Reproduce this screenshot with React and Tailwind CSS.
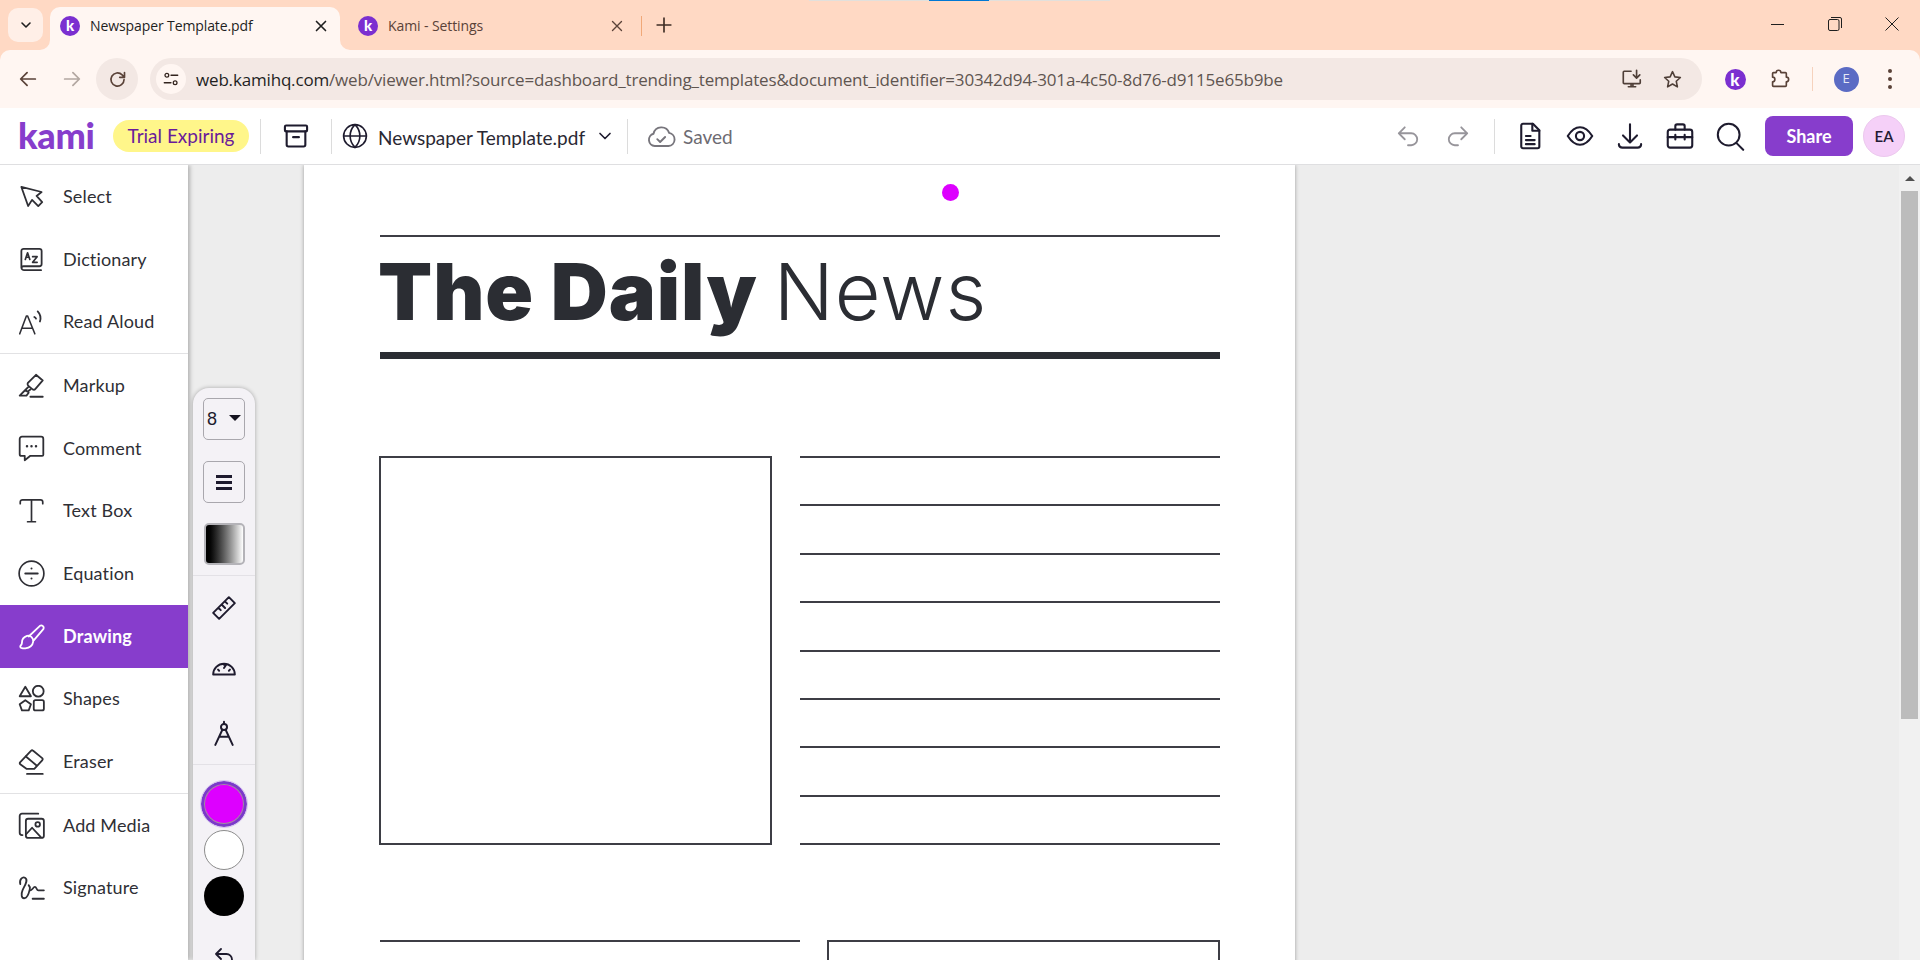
import React from 'react';

const S = ({ size = 24, w = 2, color = 'currentColor', children, className = '' }) => (
  <svg width={size} height={size} viewBox="0 0 24 24" fill="none" stroke={color} strokeWidth={w} strokeLinecap="round" strokeLinejoin="round" className={className}>
    {children}
  </svg>
);

const KBadge = ({ size = 'w-5 h-5 text-[15px]' }) => (
  <span className={`${size} rounded-full bg-[#7b2fd0] text-white font-['Lato'] font-black flex items-center justify-center leading-none shrink-0`}>k</span>
);

const sidebarIcons = {
  select: <path d="M3 3.500 21 8l-4.500 3.500 5 5.500-3.500 3.500-5.500-5.500L9 20.500z" />,
  dictionary: (
    <>
      <path d="M5 21.500h15.500M5.500 21.500A2.500 2.500 0 0 1 3 19V4.500A2 2 0 0 1 5 2.500h14a2 2 0 0 1 2 2V16a2 2 0 0 1-2 2H5a2 2 0 0 0-2 1.500" />
      <path d="m6.500 12 2-6 2 6M7.300 10h2.500M13 9.500h4l-4 5h4" strokeWidth="1.500" />
    </>
  ),
  read: (
    <>
      <path d="m1.500 23 6-16h1L15 23M4 18h8.500" strokeWidth="1.300" />
      <path d="M14.500 8a3 3 0 0 1 1.500 1.500M17.500 3a9 9 0 0 1 2 9" />
    </>
  ),
  markup: (
    <>
      <path d="M9.500 9 16 2.500l6 5-6.500 7.500a2 2 0 0 1-2.500.500l-3.500-3a2 2 0 0 1 0-3.500zM9 13.500 6.500 16l2 1.500L11 15.500M6.500 16 1.500 21h6l2-2.500" />
      <path d="M11 22h11" />
    </>
  ),
  comment: (
    <>
      <path d="M3.500 1.500h17a2 2 0 0 1 2 2v14a1 1 0 0 1-1 1H11l-5 4v-4H3a1.500 1.500 0 0 1-1.500-1.500v-13.500a2 2 0 0 1 2-2z" />
      <path d="M8 10h.01M12 10h.01M16 10h.01" strokeWidth="2.200" />
    </>
  ),
  text: <path d="M2 6V4.500A2 2 0 0 1 4 2.500h16a2 2 0 0 1 2 2V6M12 2.500v19M8.500 22h7" strokeWidth="1.500" />,
  equation: (
    <>
      <circle cx="12" cy="12" r="11" strokeWidth="1.500" />
      <path d="M6.500 12h11M12 7.500h.01M12 16.500h.01" strokeWidth="1.800" />
    </>
  ),
  drawing: (
    <>
      <path d="m9.500 12 10-9.500a2.200 2.200 0 0 1 3 3L14 15.500" />
      <path d="M8 11.500c3-1 6 2 5.500 5-.500 3.500-3 5.500-7 6-2 .200-4.500 0-4.500-1.500 0-1.500 1.500-1 1.500-3.500 0-3 1.500-5 4.500-6z" />
    </>
  ),
  shapes: (
    <>
      <path d="M6.500 1.500 11.500 10h-10z" />
      <circle cx="18" cy="5.500" r="4.800" />
      <path d="m6.500 13.500 5 3.600-2 5.400h-6l-2-5.400z" />
      <rect x="14" y="13.500" width="9" height="9" rx="1.500" />
    </>
  ),
  eraser: (
    <>
      <path d="m2 12.500 9.500-10a1.500 1.500 0 0 1 2 0l8 6.500a1.500 1.500 0 0 1 0 2l-7 7.500h-7L2 14.500a1.500 1.500 0 0 1 0-2z" />
      <path d="m7 7.500 9.500 8M8 23h14" />
    </>
  ),
  media: (
    <>
      <path d="M4 20.500H3.500A2 2 0 0 1 1.500 18.500V3.500a2 2 0 0 1 2-2H18" />
      <rect x="7" y="6" width="16" height="17" rx="2" />
      <circle cx="17.500" cy="11" r="2" />
      <path d="m7 20 5.500-6 8 8.500" />
    </>
  ),
  signature: (
    <>
      <path d="M2 9c-1-4 2-7 4.500-5.500 3 2-1 7.500-2.500 11-1.500 3.500-1 7.500 2 7 3-.500 4-6 4.500-8 .500-2-1-3.500-1-3.500" />
      <path d="M10.500 14.500c1.500 1 3-3 4.500-3s1.500 3 3 3h5M13 22h10" />
    </>
  ),
};

const items = [
  [['Select', 'select'], ['Dictionary', 'dictionary'], ['Read Aloud', 'read']],
  [['Markup', 'markup'], ['Comment', 'comment'], ['Text Box', 'text'], ['Equation', 'equation'], ['Drawing', 'drawing'], ['Shapes', 'shapes'], ['Eraser', 'eraser']],
  [['Add Media', 'media'], ['Signature', 'signature']],
];

const Sidebar = () => (
  <aside className="w-[188px] shrink-0 bg-white shadow-[2px_0_4px_rgba(0,0,0,0.25)] z-10 font-['Lato'] text-[18px] tracking-[0.150px] text-[#2f2f35]">
    {items.map((group, i) => (
      <div key={i} className={i < 2 ? 'border-b border-[#e2e2e4]' : ''}>
        {group.map(([label, icon]) => (
          <div
            key={label}
            className={`h-[62.700px] flex items-center pl-[18px] gap-[18px] ${label === 'Drawing' ? 'bg-[#873dcc] text-white font-bold' : ''}`}
          >
            <S size={27} w={1.600}>{sidebarIcons[icon]}</S>
            <span>{label}</span>
          </div>
        ))}
      </div>
    ))}
  </aside>
);

const DrawPanel = () => (
  <div className="absolute left-[193px] top-[388px] w-[62px] h-[572px] bg-[#f4f2f6] rounded-t-[16px] shadow-[0_0_4px_rgba(0,0,0,0.3)] z-20 flex flex-col items-center text-[#1e1b2e] [&>*]:shrink-0">
    <div className="mt-[10px] w-[42px] h-[42px] border border-[#a9a7ad] rounded-[5px] flex items-center justify-between pl-[3px] pr-[3px] font-['Liberation_Sans'] text-[18px]">
      <span>8</span>
      <span className="w-0 h-0 border-x-[6px] border-x-transparent border-t-[6px] border-t-[#15131f] mb-[3px]" />
    </div>
    <div className="mt-[21px] w-[42px] h-[42px] border border-[#a9a7ad] rounded-[5px] flex flex-col items-center justify-center gap-[3px]">
      <span className="w-[16px] h-[3px] bg-[#1e1b2e]" />
      <span className="w-[16px] h-[3px] bg-[#1e1b2e]" />
      <span className="w-[16px] h-[3px] bg-[#1e1b2e]" />
    </div>
    <div className="mt-[20px] w-[41px] h-[42px] rounded-[5px] border-2 border-[#b4b3b8] bg-gradient-to-r from-black to-white" />
    <div className="mt-[10px] w-full border-t border-[#e3e1e6]" />
    <div className="h-[62px] flex items-center pt-[2px]">
      <S size={26} w={1.800}>
        <path d="m2 16.500 14.500-14.500 5.500 5.500L7.500 22zM7 12l2 2M10 9l3 3M13 6l2 2" />
      </S>
    </div>
    <div className="h-[60px] flex items-center">
      <S size={26} w={1.800}>
        <path d="M2 18a10 10 0 0 1 20 0zM12 12l2-3M6.500 13.500l1 1M17.500 13.500l-1 1M12 8v1" />
      </S>
    </div>
    <div className="h-[66px] flex items-center pt-[3px]">
      <S size={26} w={1.800}>
        <circle cx="12" cy="6.500" r="2.800" />
        <path d="M12 1.500v2M10.500 9 4 23M13.500 9 20 23M7.500 15.500h9" />
      </S>
    </div>
    <div className="w-full border-t border-[#e3e1e6]" />
    <div className="mt-[16px] w-[46px] h-[46px] rounded-full bg-[#dd00ff] border-[3px] border-[#7a3bc9] outline-1 outline-[#d8c7f0] shadow-[inset_0_0_0_1px_#999]" />
    <div className="mt-[3px] w-[40px] h-[40px] rounded-full bg-white border border-[#8c8c8c]" />
    <div className="mt-[6px] w-[40px] h-[40px] rounded-full bg-black" />
    <div className="mt-[29px]">
      <S size={24} w={1.800}><path d="M9 14 4 9l5-5M4 9h10.500a5.500 5.500 0 0 1 0 11H11" /></S>
    </div>
  </div>
);

const Tab = ({ title, active, close }) => (
  <div className={`relative h-[43px] w-[290px] flex items-center pb-[6px] pl-[10px] rounded-t-[10px] ${active ? 'bg-[#fff6f2] text-[#1f1f1f] pr-[11px]' : 'text-[#5a4238] pr-[13px]'}`}>
    {active && (
      <>
        <svg className="absolute left-[-10px] bottom-0" width="10" height="10" viewBox="0 0 10 10"><path d="M10 0v10H0a10 10 0 0 0 10-10z" fill="#fff6f2" /></svg>
        <svg className="absolute right-[-10px] bottom-0" width="10" height="10" viewBox="0 0 10 10"><path d="M0 0v10h10A10 10 0 0 1 0 0z" fill="#fff6f2" /></svg>
      </>
    )}
    <KBadge />
    <span className="ml-[10px] flex-1 text-[14px] font-['Open_Sans'] tracking-[-0.100px]">{title}</span>
    <S size={18} w={close} className="mr-[-1px]"><path d="m6 6 12 12M18 6 6 18" /></S>
  </div>
);

const TabStrip = () => (
  <div className="relative h-[50px] shrink-0 bg-[#ffd9c4] flex items-end">
    <div className="absolute left-[809px] top-0 w-[301px] h-[1px] bg-[#e2e0dc]" />
    <div className="absolute left-[929px] top-0 w-[60px] h-[1px] bg-[#0078d4]" />
    <div className="self-start mt-[8px] ml-[8px] w-[35px] h-[34px] rounded-[10px] bg-[#ffefe7] flex items-center justify-center text-[#1f1f1f]">
      <S size={16} w={2.400}><path d="m6 9 6 6 6-6" /></S>
    </div>
    <div className="ml-[7px]"><Tab title="Newspaper Template.pdf" active close={2.200} /></div>
    <div className="ml-[8px]"><Tab title="Kami - Settings" close={1.800} /></div>
    <div className="self-start mt-[16px] ml-[3px] w-[1px] h-[20px] bg-[#f0a878]" />
    <div className="self-start mt-[14px] ml-[11px] text-[#3f2d25]">
      <S size={22} w={1.800}><path d="M12 4.500v15M4.500 12h15" /></S>
    </div>
    <div className="ml-auto self-start flex h-[48px] text-[#1f1f1f]">
      <div className="w-[57px] flex items-center justify-center">
        <div className="w-[13px] border-t border-[#1f1f1f]" />
      </div>
      <div className="w-[57px] flex items-center justify-center">
        <svg width="14" height="14" viewBox="0 0 14 14" fill="none" stroke="#1f1f1f"><rect x="0.500" y="2.500" width="10.500" height="11" rx="1.500" /><path d="M3 .500h9a1.500 1.500 0 0 1 1.500 1.500v9" /></svg>
      </div>
      <div className="w-[57px] flex items-center justify-center">
        <svg width="14" height="14" viewBox="0 0 14 14" fill="none" stroke="#1f1f1f"><path d="m.500.500 13 13M13.500.500l-13 13" /></svg>
      </div>
    </div>
  </div>
);

const BrowserBar = () => (
  <div className="h-[58px] shrink-0 bg-[#ffd9c4]">
    <div className="h-[59px] bg-[#fff6f2] rounded-t-[10px] border-b border-[#f7dccd] flex items-center pl-[7px] text-[#5a4238]">
      <div className="w-[42px] flex justify-center">
        <S size={22} w={1.900}><path d="M20 12H4.500M11 5l-7 7 7 7" /></S>
      </div>
      <div className="ml-[2px] w-[42px] flex justify-center text-[#b3a7a1]">
        <S size={22} w={1.900}><path d="M4 12h15.500M13 5l7 7-7 7" /></S>
      </div>
      <div className="ml-[3px] w-[42px] h-[42px] rounded-full bg-[#f3e8e4] flex items-center justify-center">
        <S size={21} w={1.900}><path d="M19.500 12a7.500 7.500 0 1 1-2.200-5.300L20 9.500M20 4v5.500h-5.500" /></S>
      </div>
      <div className="ml-[12px] w-[1552px] h-[42px] rounded-full bg-[#f3e8e4] flex items-center pl-[6px]">
        <div className="w-[30px] h-[30px] rounded-full bg-[#fff6f2] flex items-center justify-center text-[#33241e]">
          <S size={18} w={1.700}>
            <circle cx="6.500" cy="7" r="2.500" />
            <path d="M12 7h9M3 17h9" />
            <circle cx="17.500" cy="17" r="2.500" />
          </S>
        </div>
        <span className="ml-[10px] mt-[1px] text-[17px] font-['Open_Sans'] tracking-[-0.170px] text-[#1f1f1f] whitespace-nowrap">
          web.kamihq.com<span className="text-[#5f5550]">/web/viewer.html?source=dashboard_trending_templates&amp;document_identifier=30342d94-301a-4c50-8d76-d9115e65b9be</span>
        </span>
        <div className="ml-auto flex items-center pr-[10px] text-[#4f3f38]">
          <div className="w-[40px] flex justify-center">
            <S size={22} w={1.800}>
              <path d="M11 3.500H3.500a1 1 0 0 0-1 1V16a1 1 0 0 0 1 1H20a1 1 0 0 0 1-1v-3M8 20.500h8M11 17v3.500M13 17v3.500" />
              <path d="M17 2.500v8M13.500 7.500l3.500 3.500 3.500-3.500" />
            </S>
          </div>
          <div className="w-[40px] flex justify-center">
            <S size={21} w={1.800}><path d="m12 3 2.700 6 6.300.700-4.700 4.300 1.300 6.500L12 17.200 6.400 20.500l1.300-6.500L3 9.700 9.300 9z" /></S>
          </div>
        </div>
      </div>
      <div className="ml-[11px] w-[44px] flex justify-center"><KBadge size="w-[21px] h-[21px] text-[17px]" /></div>
      <div className="w-[44px] flex justify-center">
        <S size={22} w={1.800}>
          <path d="M9 5a2.500 2.500 0 0 1 5 0h5a1 1 0 0 1 1 1v4a2.500 2.500 0 0 1 0 5v4a1 1 0 0 1-1 1H6a1 1 0 0 1-1-1v-4a2.500 2.500 0 0 0 0-5V6a1 1 0 0 1 1-1z" />
        </S>
      </div>
      <div className="ml-[11px] w-[1px] h-[24px] bg-[#f6d2bd]" />
      <div className="ml-[11px] w-[44px] flex justify-center">
        <span className="w-[25px] h-[25px] rounded-full bg-[#5b6bc4] text-[#e6e8f7] text-[13px] font-['Open_Sans'] flex items-center justify-center">E</span>
      </div>
      <div className="w-[44px] flex flex-col items-center gap-[4px]">
        <span className="w-[4px] h-[4px] rounded-full bg-[#5a4238]" />
        <span className="w-[4px] h-[4px] rounded-full bg-[#5a4238]" />
        <span className="w-[4px] h-[4px] rounded-full bg-[#5a4238]" />
      </div>
    </div>
  </div>
);

const HeadBtn = ({ children, className = '' }) => (
  <div className={`w-[50px] flex justify-center ${className}`}>{children}</div>
);

const AppHeader = () => (
  <div className="h-[57px] shrink-0 bg-white border-b border-[#dfdfe1] flex items-center font-['Lato'] z-30 relative">
    <span className="ml-[18px] w-[75px] text-[#873dcc] text-[36px] font-black leading-none tracking-[-0.300px] mb-[2px]">kami</span>
    <span className="ml-[20px] w-[136px] h-[32px] pt-[1px] rounded-full bg-[#fff68a] text-[#6a1b9a] text-[19px] flex items-center justify-center">Trial Expiring</span>
    <div className="ml-[11px] w-[1px] h-[35px] bg-[#dcdcdc]" />
    <div className="w-[70px] flex justify-center text-[#1e1b2e]">
      <S size={28} w={1.800}>
        <rect x="2.500" y="3" width="19" height="5" rx="1" />
        <path d="M4 8v11.500A1.500 1.500 0 0 0 5.500 21h13a1.500 1.500 0 0 0 1.500-1.500V8M9.500 13h5" />
      </S>
    </div>
    <div className="w-[1px] h-[35px] bg-[#dcdcdc]" />
    <div className="ml-[10px] text-[#1e1b2e]">
      <S size={26} w={1.500}>
        <circle cx="12" cy="12" r="10.500" />
        <path d="M1.500 12h21M12 1.500c3 3 4.500 6.500 4.500 10.500s-1.500 7.500-4.500 10.500c-3-3-4.500-6.500-4.500-10.500S9 4.500 12 1.500z" />
      </S>
    </div>
    <span className="ml-[10px] mt-[5px] w-[207px] text-[19px] text-[#2a2833] whitespace-nowrap">Newspaper Template.pdf</span>
    <div className="w-[40px] flex justify-center text-[#1e1b2e]">
      <S size={20} w={2}><path d="m6 9 6 6 6-6" /></S>
    </div>
    <div className="ml-[2px] w-[1px] h-[35px] bg-[#dcdcdc]" />
    <div className="ml-[18px] text-[#77757c]">
      <S size={30} w={1.500}>
        <path d="M7 20a5 5 0 0 1-1-9.800 6.500 6.500 0 0 1 12.500-.700A5.300 5.300 0 0 1 18 20z" />
        <path d="m9 14.500 2.300 2.300 4-4" />
      </S>
    </div>
    <span className="ml-[7px] mt-[3px] text-[19px] text-[#6d6b72]">Saved</span>
    <div className="ml-auto flex items-center pr-[15px]">
      <HeadBtn className="text-[#97959b]"><S size={26} w={1.700}><path d="M9 15 3.500 9.500 9 4M3.500 9.500H15a5.500 5.500 0 0 1 0 11h-3" /></S></HeadBtn>
      <HeadBtn className="text-[#97959b]"><S size={26} w={1.700}><path d="m15 15 5.500-5.500L15 4M20.500 9.500H9a5.500 5.500 0 0 0 0 11h3" /></S></HeadBtn>
      <div className="ml-[11px] w-[1px] h-[35px] bg-[#dcdcdc]" />
      <div className="ml-[10px] flex text-[#1e1b2e]">
        <HeadBtn>
          <S size={28} w={1.800}>
            <path d="M6 1.500h8.500L20 7v14a1.500 1.500 0 0 1-1.500 1.500h-12.500A1.500 1.500 0 0 1 4.500 21V3A1.500 1.500 0 0 1 6 1.500z" />
            <path d="M14 1.500V7.500h6M8.500 12h4M8.500 15.500h7.500M8.500 19h7.500" />
          </S>
        </HeadBtn>
        <HeadBtn>
          <S size={28} w={1.800}>
            <path d="M1.500 12C5 6.500 8.500 4.500 12 4.500s7 2 10.500 7.500C19 17.500 15.500 19.500 12 19.500S5 17.500 1.500 12z" />
            <circle cx="12" cy="12" r="3.500" />
          </S>
        </HeadBtn>
        <HeadBtn>
          <S size={28} w={1.800}>
            <path d="M12 2v15M6 11.500l6 6 6-6M2.500 19v.500a3 3 0 0 0 3 2.500h13a3 3 0 0 0 3-2.500V19" />
          </S>
        </HeadBtn>
        <HeadBtn>
          <S size={28} w={1.800}>
            <rect x="1.500" y="6.500" width="21" height="15.500" rx="2" />
            <path d="M8 6.500V3.500a1.500 1.500 0 0 1 1.500-1.500h5A1.500 1.500 0 0 1 16 3.500v3M1.500 13h21M8 11v4M16 11v4" />
          </S>
        </HeadBtn>
        <HeadBtn>
          <S size={29} w={1.700}>
            <circle cx="10.500" cy="10.500" r="9" />
            <path d="m17 17.500 5.500 5.500" />
          </S>
        </HeadBtn>
      </div>
      <div className="ml-[10px] w-[88px] h-[40px] rounded-[8px] bg-[#873dcc] text-white text-[18px] font-bold flex items-center justify-center">Share</div>
      <div className="ml-[10px] w-[42px] h-[42px] rounded-full bg-[#f5d0f8] border border-[#ecc8ee] text-[#231a33] text-[15px] font-semibold flex items-center justify-center">EA</div>
    </div>
  </div>
);

const Rule = () => <div className="border-t-2 border-[#3d3e45]" />;

const Page = () => (
  <div className="relative ml-[116px] w-[991px] shrink-0 bg-white shadow-[0_0_4px_rgba(0,0,0,0.35)] pl-[76px] pr-[75px] pt-[70px] min-h-[1400px] text-[#2b2d33]">
    <div className="absolute left-[638px] top-[19px] w-[17px] h-[17px] rounded-full bg-[#dd00ff]" />
    <Rule />
    <h1 className="h-[115px] pb-[6px] flex items-center font-['Inter'] text-[79px] leading-none whitespace-nowrap">
      <span className="font-black tracking-[0.900px] -ml-[2px]">The Daily</span>
      <span className="ml-[16px] font-light tracking-[1px]">News</span>
    </h1>
    <div className="h-[7px] bg-[#2b2d33]" />
    <div className="mt-[97px] flex gap-[27px]">
      <div className="-ml-[1px] w-[393px] h-[389px] border-2 border-[#3d3e45]" />
      <div className="ml-[1px] w-[420px] h-[389px] flex flex-col justify-between">
        {Array.from({ length: 9 }).map((_, i) => <Rule key={i} />)}
      </div>
    </div>
    <div className="mt-[95px] flex gap-[27px]">
      <div className="w-[421px]"><Rule /></div>
      <div className="w-[393px] h-[300px] border-2 border-[#3d3e45]" />
    </div>
  </div>
);

const Scrollbar = () => (
  <div className="w-[21px] shrink-0 bg-[#f1f1f1] flex flex-col items-center">
    <div className="h-[26px] flex items-center justify-center">
      <span className="w-0 h-0 border-x-[5px] border-x-transparent border-b-[5px] border-b-[#505050]" />
    </div>
    <div className="w-[17px] h-[528px] bg-[#bcbcbc]" />
  </div>
);

export default function App() {
  return (
    <div className="relative w-[1920px] h-[960px] overflow-hidden flex flex-col bg-[#ededed]">
      <TabStrip />
      <BrowserBar />
      <AppHeader />
      <div className="flex flex-1 min-h-0">
        <Sidebar />
        <div className="flex-1 flex min-w-0 overflow-hidden">
          <div className="flex-1 min-w-0"><Page /></div>
          <Scrollbar />
        </div>
        <DrawPanel />
      </div>
    </div>
  );
}
